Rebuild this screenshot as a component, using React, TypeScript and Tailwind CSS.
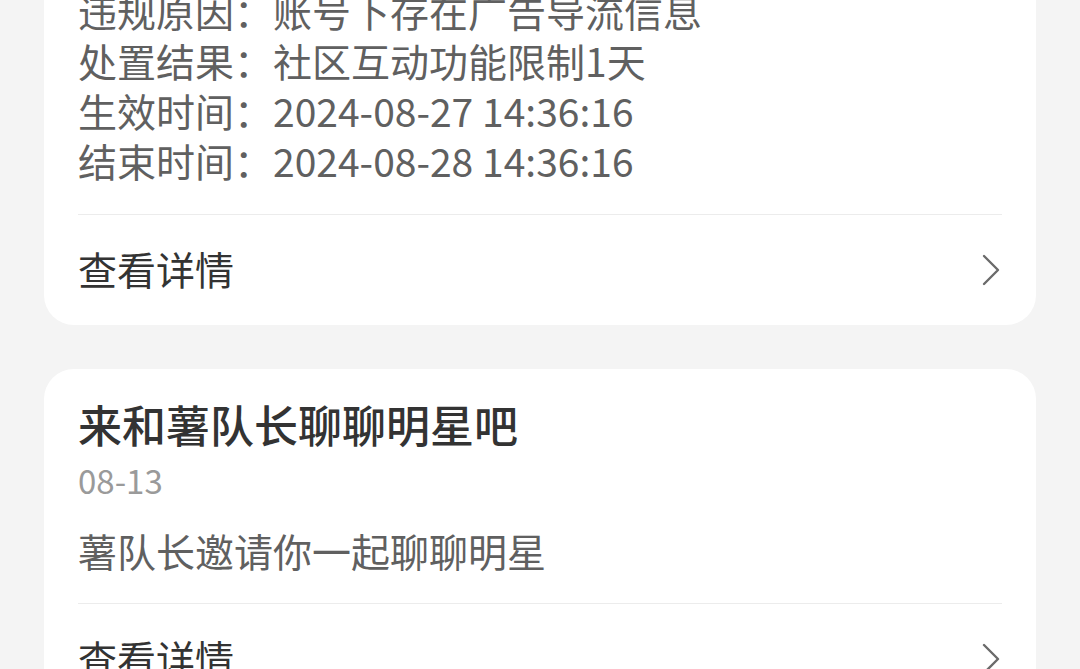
import React from "react";

const font = { fontFamily: '"Noto Sans CJK SC", "Noto Sans", sans-serif' };

function Chevron() {
  return (
    <svg width="18" height="32" viewBox="0 0 18 32" fill="none">
      <path d="M2 2 L16 16 L2 30" stroke="#6b6b6b" strokeWidth="2.4" strokeLinecap="round" strokeLinejoin="round" />
    </svg>
  );
}

function DetailRow() {
  return (
    <div className="flex h-[111px] items-center justify-between border-t border-[#ececec] pr-[2px]">
      <span className="-mt-[4px] text-[39px] leading-[50px] text-[#333333]">查看详情</span>
      <Chevron />
    </div>
  );
}

function InfoLine({ label, value }: { label: string; value: string }) {
  return (
    <div className="flex text-[39px] leading-[50px] text-[#606060]">
      <span>{label}：</span>
      <span>{value}</span>
    </div>
  );
}

export default function App() {
  return (
    <div className="h-[669px] w-[1080px] overflow-hidden bg-[#f4f4f4]" style={font}>
      <div className="mx-[44px] -mt-[15px] flex flex-col gap-[44px]">
        <div className="rounded-b-[30px] bg-white px-[34px]">
          <div className="flex flex-col pb-[29px]">
            <InfoLine label="违规原因" value="账号下存在广告导流信息" />
            <InfoLine label="处置结果" value="社区互动功能限制1天" />
            <InfoLine label="生效时间" value="2024-08-27 14:36:16" />
            <InfoLine label="结束时间" value="2024-08-28 14:36:16" />
          </div>
          <DetailRow />
        </div>
        <div className="rounded-[30px] bg-white px-[34px] pt-[27px]">
          <div className="text-[44px] font-medium leading-[56px] text-[#333333]">来和薯队长聊聊明星吧</div>
          <div className="mt-[8px] text-[33px] leading-[40px] text-[#9a9a9a]">08-13</div>
          <div className="mt-[25px] pb-[28px] text-[39px] leading-[50px] text-[#606060]">薯队长邀请你一起聊聊明星</div>
          <DetailRow />
        </div>
      </div>
    </div>
  );
}
